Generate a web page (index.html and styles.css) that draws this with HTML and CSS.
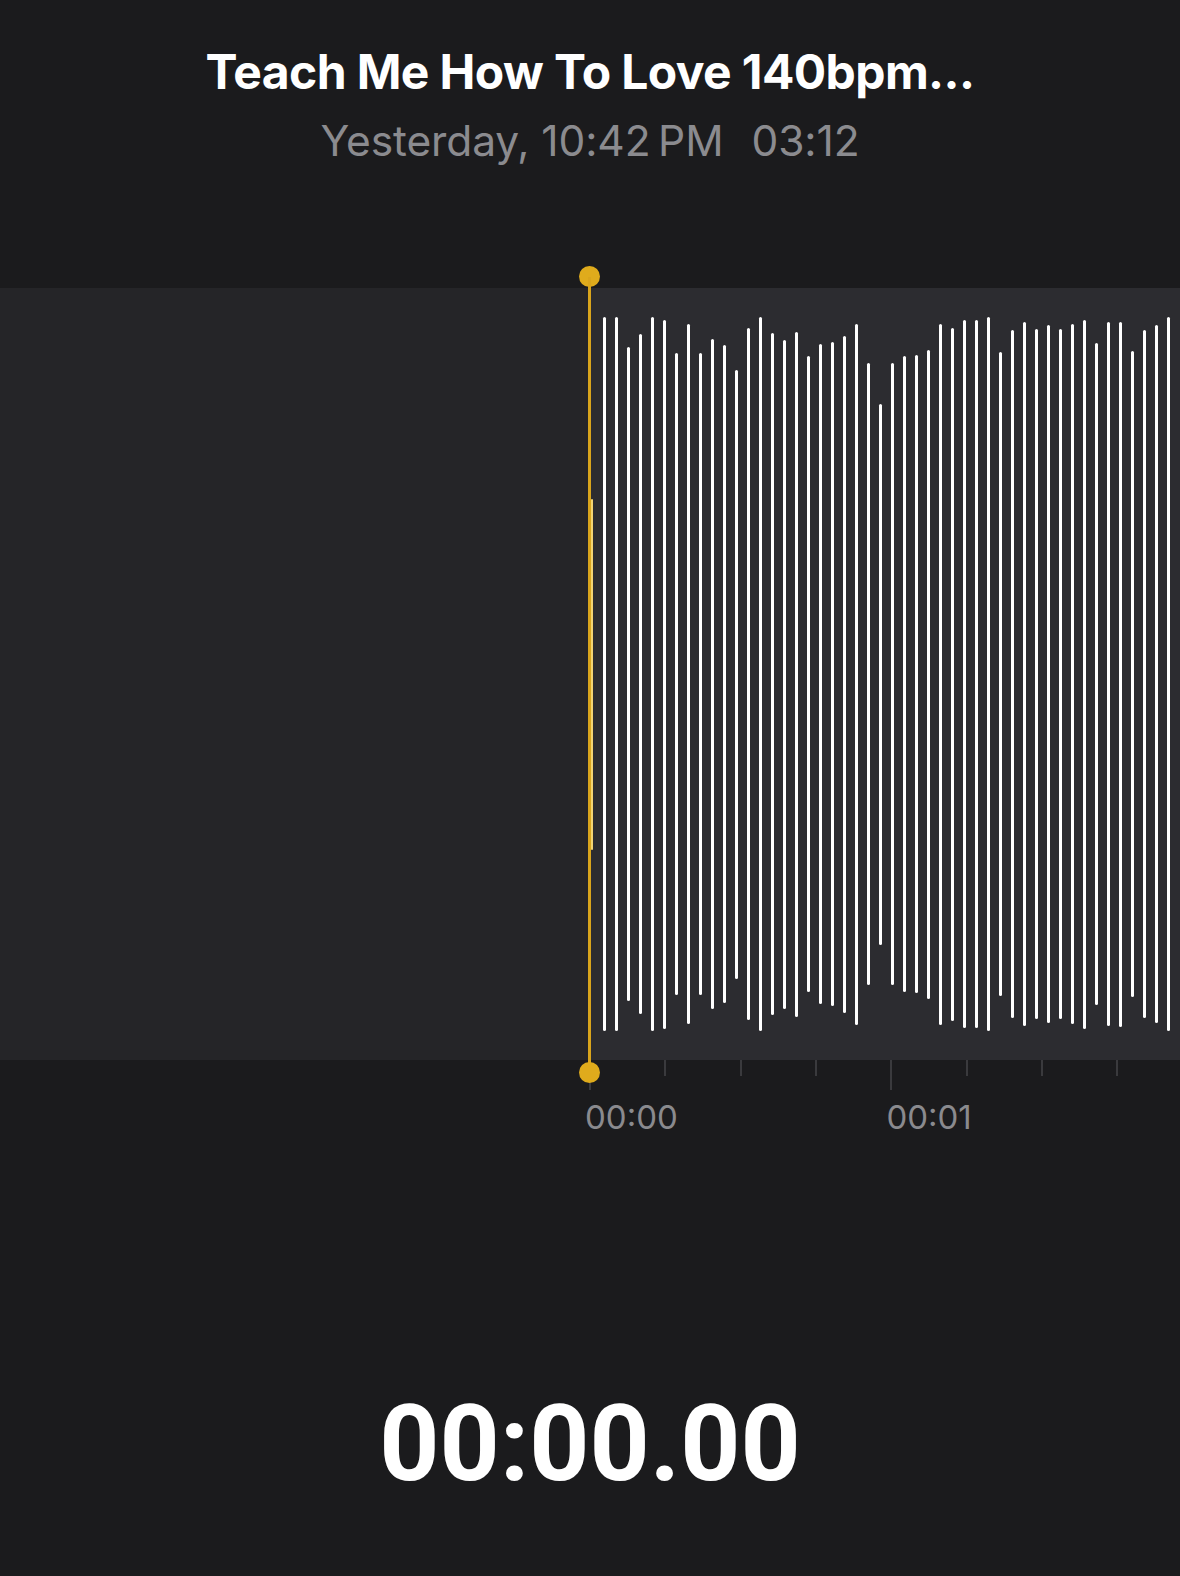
FILE: index.html
```html
<!DOCTYPE html>
<html lang="en">
<head>
<meta charset="utf-8">
<title>Voice Memo</title>
<link rel="stylesheet" href="styles.css">
</head>
<body>
<header class="header">
  <h1 class="title">Teach Me How To Love 140bpm...</h1>
  <div class="meta"><span class="date">Yesterday, 10:42&#8201;PM</span><span class="dur">03:12</span></div>
</header>

<section class="track">
  <div class="past"></div>
  <div class="wave">
    <span class="bar bar-head" style="height:351px"></span>
    <span class="bar" style="height:714px"></span>
    <span class="bar" style="height:714px"></span>
    <span class="bar" style="height:654px"></span>
    <span class="bar" style="height:680px"></span>
    <span class="bar" style="height:714px"></span>
    <span class="bar" style="height:709px"></span>
    <span class="bar" style="height:642px"></span>
    <span class="bar" style="height:700px"></span>
    <span class="bar" style="height:642px"></span>
    <span class="bar" style="height:670px"></span>
    <span class="bar" style="height:658px"></span>
    <span class="bar" style="height:609px"></span>
    <span class="bar" style="height:692px"></span>
    <span class="bar" style="height:714px"></span>
    <span class="bar" style="height:682px"></span>
    <span class="bar" style="height:669px"></span>
    <span class="bar" style="height:685px"></span>
    <span class="bar" style="height:636px"></span>
    <span class="bar" style="height:660px"></span>
    <span class="bar" style="height:664px"></span>
    <span class="bar" style="height:677px"></span>
    <span class="bar" style="height:701px"></span>
    <span class="bar" style="height:622px"></span>
    <span class="bar" style="height:541px"></span>
    <span class="bar" style="height:622px"></span>
    <span class="bar" style="height:636px"></span>
    <span class="bar" style="height:638px"></span>
    <span class="bar" style="height:649px"></span>
    <span class="bar" style="height:701px"></span>
    <span class="bar" style="height:693px"></span>
    <span class="bar" style="height:708px"></span>
    <span class="bar" style="height:708px"></span>
    <span class="bar" style="height:714px"></span>
    <span class="bar" style="height:644px"></span>
    <span class="bar" style="height:688px"></span>
    <span class="bar" style="height:704px"></span>
    <span class="bar" style="height:690px"></span>
    <span class="bar" style="height:698px"></span>
    <span class="bar" style="height:690px"></span>
    <span class="bar" style="height:700px"></span>
    <span class="bar" style="height:709px"></span>
    <span class="bar" style="height:662px"></span>
    <span class="bar" style="height:704px"></span>
    <span class="bar" style="height:705px"></span>
    <span class="bar" style="height:646px"></span>
    <span class="bar" style="height:688px"></span>
    <span class="bar" style="height:698px"></span>
    <span class="bar" style="height:714px"></span>
  </div>
  <div class="playhead">
    <span class="knob knob-top"></span>
    <span class="line"></span>
    <span class="knob knob-bottom"></span>
  </div>
</section>

<div class="ruler">
  <div class="sec">
    <div class="ticks">
      <span class="tick major"></span><span class="tick"></span><span class="tick"></span><span class="tick"></span>
    </div>
    <div class="label">00:00</div>
  </div>
  <div class="sec">
    <div class="ticks">
      <span class="tick major"></span><span class="tick"></span><span class="tick"></span><span class="tick"></span>
    </div>
    <div class="label">00:01</div>
  </div>
</div>

<div class="timer">00:00.00</div>
</body>
</html>
```

FILE: styles.css
```css
* { box-sizing: border-box; }

html, body {
  margin: 0;
  padding: 0;
  background: #1b1b1d;
  width: 1180px;
  height: 1576px;
  overflow: hidden;
  font-family: Inter, "Noto Sans", "Liberation Sans", sans-serif;
}

.header {
  padding-top: 43px;
  display: flex;
  flex-direction: column;
  align-items: center;
}

.title {
  margin: 0;
  font-size: 48px;
  line-height: 58px;
  font-weight: 700;
  color: #ffffff;
  letter-spacing: -0.6px;
}

.meta {
  margin-top: 14px;
  display: flex;
  gap: 28px;
  font-size: 42.5px;
  line-height: 52px;
  font-weight: 400;
  color: #8b8b8f;
  letter-spacing: -0.1px;
}

.track {
  position: relative;
  margin-top: 121px;
  height: 772px;
  display: flex;
  background: #2c2c30;
}

.past {
  flex: 0 0 590px;
  background: #252528;
}

.wave {
  flex: 1;
  display: flex;
  align-items: center;
  gap: 9px;
  overflow: hidden;
}

.bar {
  flex: 0 0 3px;
  width: 3px;
  background: #ffffff;
  border-radius: 1.5px;
}

.bar-head {
  background: #f3d472;
  margin-left: 1px;
  flex-basis: 2px;
  width: 2px;
  margin-right: 1px;
}

.playhead {
  position: absolute;
  left: 579px;
  top: -22px;
  width: 21px;
  bottom: -23px;
  display: flex;
  flex-direction: column;
  align-items: center;
}

.knob {
  flex: 0 0 21px;
  width: 21px;
  height: 21px;
  border-radius: 50%;
  background: #dfab1c;
}

.line {
  flex: 1;
  width: 3px;
  margin: -10px 0;
  margin-left: -1px;
  background: #d9a51c;
}

.ruler {
  display: flex;
  padding-left: 589px;
}

.sec {
  flex: 0 0 301.4px;
  display: flex;
  flex-direction: column;
}

.ticks {
  display: flex;
  height: 30px;
  align-items: flex-start;
}

.tick {
  flex: 0 0 75.35px;
  height: 16px;
  border-left: 2px solid #3a3a3d;
}

.tick.major {
  height: 30px;
}

.label {
  margin-top: 7px;
  margin-left: -4px;
  font-size: 33px;
  line-height: 40px;
  font-weight: 400;
  color: #8a8a8e;
}

.timer {
  margin-top: 245px;
  text-align: center;
  font-family: Roboto, Inter, "Liberation Sans", sans-serif;
  font-size: 105px;
  line-height: 126px;
  font-weight: 700;
  color: #ffffff;
}
```
